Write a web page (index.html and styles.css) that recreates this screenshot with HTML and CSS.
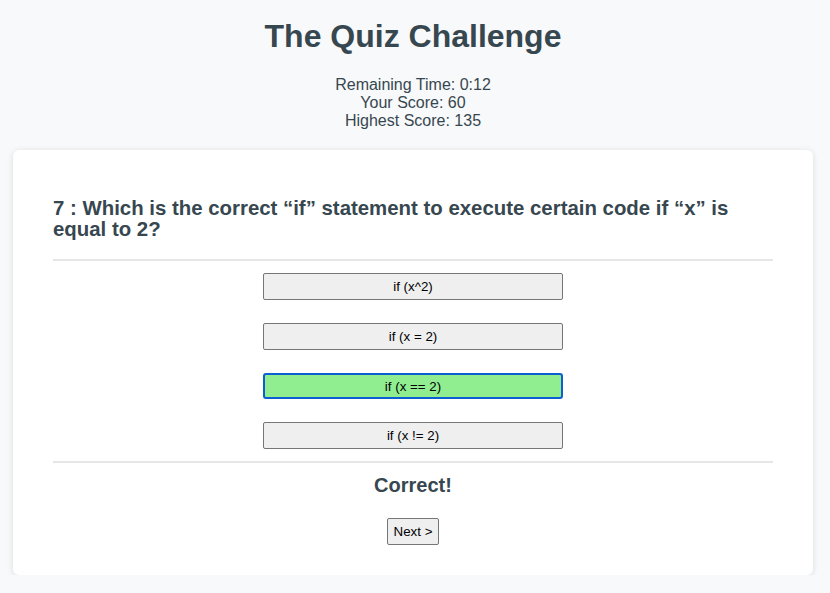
FILE: index.html
```html
<!DOCTYPE html>
<html lang="en">
<head>
<meta charset="utf-8">
<title>The Quiz Challenge</title>
<link rel="stylesheet" href="styles.css">
</head>
<body>
<header class="header">
  <h1 class="title">The Quiz Challenge</h1>
  <div class="stats">
    <div>Remaining Time: 0:12</div>
    <div>Your Score: 60</div>
    <div>Highest Score: 135</div>
  </div>
</header>
<main class="card">
  <h2 class="question">7 : Which is the correct “if” statement to execute certain code if “x” is equal to 2?</h2>
  <hr class="rule">
  <div class="answers">
    <button class="answer">if (x^2)</button>
    <button class="answer">if (x = 2)</button>
    <button class="answer answer-correct">if (x == 2)</button>
    <button class="answer">if (x != 2)</button>
  </div>
  <hr class="rule rule-bottom">
  <div class="result">Correct!</div>
  <div class="next-row"><button class="next">Next &gt;</button></div>
</main>
</body>
</html>
```
FILE: styles.css
```css
html, body {
  margin: 0;
  padding: 0;
}
body {
  background: #f8f9fb;
  color: #37474f;
  font-family: "Liberation Sans", Arial, sans-serif;
  padding: 0 17px 0 13px;
}
.header {
  text-align: center;
  padding-top: 18px;
}
.title {
  margin: 0;
  font-size: 32px;
  line-height: 37px;
  font-weight: bold;
}
.stats {
  margin-top: 21px;
  font-size: 16px;
  line-height: 18px;
}
.card {
  margin-top: 20px;
  background: #fff;
  border-radius: 6px;
  box-shadow: 0 1px 6px rgba(0, 0, 0, 0.12);
  padding: 48px 40px 30px;
}
.question {
  margin: 0;
  font-size: 20.4px;
  line-height: 21px;
  font-weight: bold;
}
.rule {
  border: 0;
  height: 2px;
  background: #e6e6e6;
  margin: 19px 0 0;
}
.rule-bottom {
  margin-top: 0;
}
.answers {
  display: flex;
  flex-direction: column;
  align-items: center;
  gap: 23px;
  padding: 12px 0 12px;
}
.answer {
  width: 300px;
  height: 27px;
  box-sizing: border-box;
  background: #efefef;
  border: 1px solid #767676;
  border-radius: 2px;
  font: 13.333px "Liberation Sans", Arial, sans-serif;
  color: #000;
  padding: 0;
}
.answer-correct {
  background: #90ee90;
  border: 2px solid #0b5fd0;
  border-radius: 3px;
  height: 26px;
}
.result {
  text-align: center;
  font-size: 20px;
  font-weight: bold;
  line-height: 24px;
  margin-top: 10px;
}
.next-row {
  text-align: center;
  margin-top: 21px;
}
.next {
  height: 27px;
  padding: 0 6px;
  background: #efefef;
  border: 1px solid #767676;
  border-radius: 2px;
  font: 13.333px "Liberation Sans", Arial, sans-serif;
  color: #000;
}
```
